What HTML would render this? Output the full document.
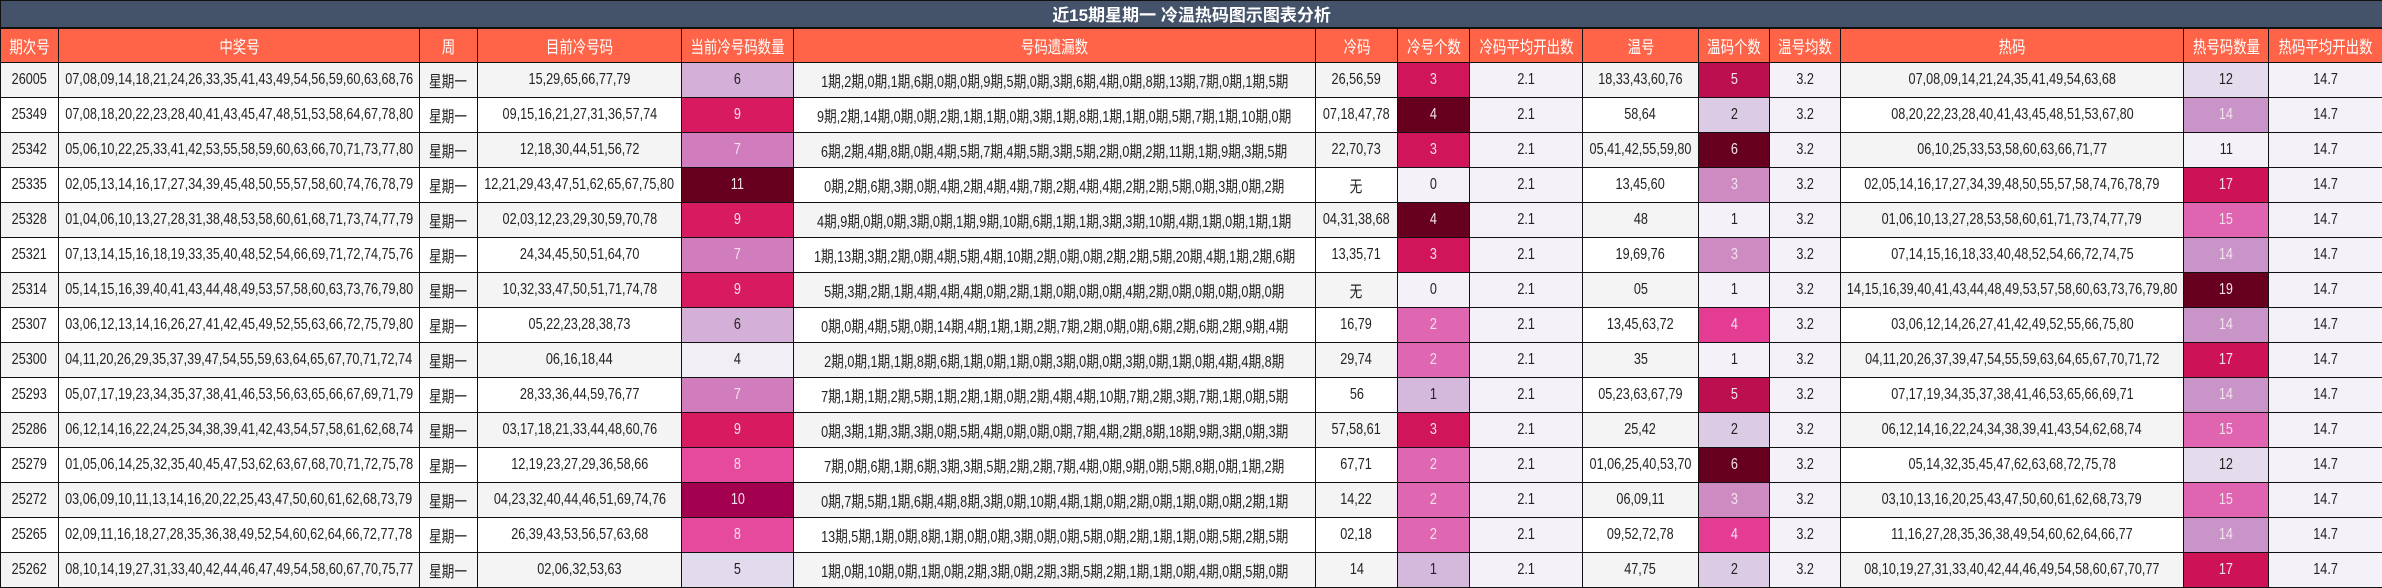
<!DOCTYPE html>
<html><head><meta charset="utf-8"><style>
*{margin:0;padding:0;box-sizing:border-box}
body{width:2382px;height:588px;overflow:hidden;background:#fff;font-family:"Liberation Sans","Noto Sans CJK SC",sans-serif}
table{border-collapse:collapse;table-layout:fixed;width:2382px}
td,th{border:1px solid #111;text-align:center;white-space:nowrap;font-weight:normal;font-size:16px;color:#222;overflow:visible}
th{background:#ff6448;color:#fff;height:35px;font-size:17px}
.t{background:#44536a;color:#fff;font-weight:bold;font-size:17px;height:27px;border-bottom:2px solid #111}
tr.r td{height:35px}
tr.o td{background:#f4f4f4}
tr.e td{background:#fff}
span{display:inline-block;margin:0 -80px;transform:scaleX(.79)}
.t span{transform:none;margin:0}
tr td.a{background:#f4f2f8}
.w{color:#f3e3ed}
</style></head><body>
<table>
<colgroup><col style="width:58px"><col style="width:361px"><col style="width:58px"><col style="width:204px"><col style="width:112px"><col style="width:522px"><col style="width:82px"><col style="width:72px"><col style="width:113px"><col style="width:116px"><col style="width:71px"><col style="width:71px"><col style="width:343px"><col style="width:85px"><col style="width:114px"></colgroup>
<tr><td class="t" colspan="15"><span>近15期星期一 冷温热码图示图表分析</span></td></tr>
<tr><th><span>期次号</span></th><th><span>中奖号</span></th><th><span>周</span></th><th><span>目前冷号码</span></th><th><span>当前冷号码数量</span></th><th><span>号码遗漏数</span></th><th><span>冷码</span></th><th><span>冷号个数</span></th><th><span>冷码平均开出数</span></th><th><span>温号</span></th><th><span>温码个数</span></th><th><span>温号均数</span></th><th><span>热码</span></th><th><span>热号码数量</span></th><th><span>热码平均开出数</span></th></tr>

<tr class="r o"><td><span>26005</span></td><td><span>07,08,09,14,18,21,24,26,33,35,41,43,49,54,56,59,60,63,68,76</span></td><td><span>星期一</span></td><td><span>15,29,65,66,77,79</span></td><td style="background:#d4afd7"><span>6</span></td><td><span>1期,2期,0期,1期,6期,0期,0期,9期,5期,0期,3期,6期,4期,0期,8期,13期,7期,0期,1期,5期</span></td><td><span>26,56,59</span></td><td class="w" style="background:#d0155a"><span>3</span></td><td class="a"><span>2.1</span></td><td><span>18,33,43,60,76</span></td><td class="w" style="background:#bc0f4f"><span>5</span></td><td class="a"><span>3.2</span></td><td><span>07,08,09,14,21,24,35,41,49,54,63,68</span></td><td style="background:#e4dbec"><span>12</span></td><td class="a"><span>14.7</span></td></tr>

<tr class="r e"><td><span>25349</span></td><td><span>07,08,18,20,22,23,28,40,41,43,45,47,48,51,53,58,64,67,78,80</span></td><td><span>星期一</span></td><td><span>09,15,16,21,27,31,36,57,74</span></td><td class="w" style="background:#d81b60"><span>9</span></td><td><span>9期,2期,14期,0期,0期,2期,1期,1期,0期,3期,1期,8期,1期,1期,0期,5期,7期,1期,10期,0期</span></td><td><span>07,18,47,78</span></td><td class="w" style="background:#67001f"><span>4</span></td><td class="a"><span>2.1</span></td><td><span>58,64</span></td><td style="background:#dccbe4"><span>2</span></td><td class="a"><span>3.2</span></td><td><span>08,20,22,23,28,40,41,43,45,48,51,53,67,80</span></td><td class="w" style="background:#c994c7"><span>14</span></td><td class="a"><span>14.7</span></td></tr>

<tr class="r o"><td><span>25342</span></td><td><span>05,06,10,22,25,33,41,42,53,55,58,59,60,63,66,70,71,73,77,80</span></td><td><span>星期一</span></td><td><span>12,18,30,44,51,56,72</span></td><td class="w" style="background:#d17cbd"><span>7</span></td><td><span>6期,2期,4期,8期,0期,4期,5期,7期,4期,5期,3期,5期,2期,0期,2期,11期,1期,9期,3期,5期</span></td><td><span>22,70,73</span></td><td class="w" style="background:#d0155a"><span>3</span></td><td class="a"><span>2.1</span></td><td><span>05,41,42,55,59,80</span></td><td class="w" style="background:#67001f"><span>6</span></td><td class="a"><span>3.2</span></td><td><span>06,10,25,33,53,58,60,63,66,71,77</span></td><td class="a"><span>11</span></td><td class="a"><span>14.7</span></td></tr>

<tr class="r e"><td><span>25335</span></td><td><span>02,05,13,14,16,17,27,34,39,45,48,50,55,57,58,60,74,76,78,79</span></td><td><span>星期一</span></td><td><span>12,21,29,43,47,51,62,65,67,75,80</span></td><td class="w" style="background:#67001f"><span>11</span></td><td><span>0期,2期,6期,3期,0期,4期,2期,4期,4期,7期,2期,4期,4期,2期,2期,5期,0期,3期,0期,2期</span></td><td><span>无</span></td><td class="a"><span>0</span></td><td class="a"><span>2.1</span></td><td><span>13,45,60</span></td><td class="w" style="background:#cd8bc2"><span>3</span></td><td class="a"><span>3.2</span></td><td><span>02,05,14,16,17,27,34,39,48,50,55,57,58,74,76,78,79</span></td><td class="w" style="background:#ce1256"><span>17</span></td><td class="a"><span>14.7</span></td></tr>

<tr class="r o"><td><span>25328</span></td><td><span>01,04,06,10,13,27,28,31,38,48,53,58,60,61,68,71,73,74,77,79</span></td><td><span>星期一</span></td><td><span>02,03,12,23,29,30,59,70,78</span></td><td class="w" style="background:#d81b60"><span>9</span></td><td><span>4期,9期,0期,0期,3期,0期,1期,9期,10期,6期,1期,1期,3期,3期,10期,4期,1期,0期,1期,1期</span></td><td><span>04,31,38,68</span></td><td class="w" style="background:#67001f"><span>4</span></td><td class="a"><span>2.1</span></td><td><span>48</span></td><td class="a"><span>1</span></td><td class="a"><span>3.2</span></td><td><span>01,06,10,13,27,28,53,58,60,61,71,73,74,77,79</span></td><td class="w" style="background:#df65b0"><span>15</span></td><td class="a"><span>14.7</span></td></tr>

<tr class="r e"><td><span>25321</span></td><td><span>07,13,14,15,16,18,19,33,35,40,48,52,54,66,69,71,72,74,75,76</span></td><td><span>星期一</span></td><td><span>24,34,45,50,51,64,70</span></td><td class="w" style="background:#d17cbd"><span>7</span></td><td><span>1期,13期,3期,2期,0期,4期,5期,4期,10期,2期,0期,0期,2期,2期,5期,20期,4期,1期,2期,6期</span></td><td><span>13,35,71</span></td><td class="w" style="background:#d0155a"><span>3</span></td><td class="a"><span>2.1</span></td><td><span>19,69,76</span></td><td class="w" style="background:#cd8bc2"><span>3</span></td><td class="a"><span>3.2</span></td><td><span>07,14,15,16,18,33,40,48,52,54,66,72,74,75</span></td><td class="w" style="background:#c994c7"><span>14</span></td><td class="a"><span>14.7</span></td></tr>

<tr class="r o"><td><span>25314</span></td><td><span>05,14,15,16,39,40,41,43,44,48,49,53,57,58,60,63,73,76,79,80</span></td><td><span>星期一</span></td><td><span>10,32,33,47,50,51,71,74,78</span></td><td class="w" style="background:#d81b60"><span>9</span></td><td><span>5期,3期,2期,1期,4期,4期,4期,0期,2期,1期,0期,0期,0期,4期,2期,0期,0期,0期,0期,0期</span></td><td><span>无</span></td><td class="a"><span>0</span></td><td class="a"><span>2.1</span></td><td><span>05</span></td><td class="a"><span>1</span></td><td class="a"><span>3.2</span></td><td><span>14,15,16,39,40,41,43,44,48,49,53,57,58,60,63,73,76,79,80</span></td><td class="w" style="background:#67001f"><span>19</span></td><td class="a"><span>14.7</span></td></tr>

<tr class="r e"><td><span>25307</span></td><td><span>03,06,12,13,14,16,26,27,41,42,45,49,52,55,63,66,72,75,79,80</span></td><td><span>星期一</span></td><td><span>05,22,23,28,38,73</span></td><td style="background:#d4afd7"><span>6</span></td><td><span>0期,0期,4期,5期,0期,14期,4期,1期,1期,2期,7期,2期,0期,0期,6期,2期,6期,2期,9期,4期</span></td><td><span>16,79</span></td><td class="w" style="background:#df66b0"><span>2</span></td><td class="a"><span>2.1</span></td><td><span>13,45,63,72</span></td><td class="w" style="background:#e43b93"><span>4</span></td><td class="a"><span>3.2</span></td><td><span>03,06,12,14,26,27,41,42,49,52,55,66,75,80</span></td><td class="w" style="background:#c994c7"><span>14</span></td><td class="a"><span>14.7</span></td></tr>

<tr class="r o"><td><span>25300</span></td><td><span>04,11,20,26,29,35,37,39,47,54,55,59,63,64,65,67,70,71,72,74</span></td><td><span>星期一</span></td><td><span>06,16,18,44</span></td><td style="background:#f1eef6"><span>4</span></td><td><span>2期,0期,1期,1期,8期,6期,1期,0期,1期,0期,3期,0期,0期,3期,0期,1期,0期,4期,4期,8期</span></td><td><span>29,74</span></td><td class="w" style="background:#df66b0"><span>2</span></td><td class="a"><span>2.1</span></td><td><span>35</span></td><td class="a"><span>1</span></td><td class="a"><span>3.2</span></td><td><span>04,11,20,26,37,39,47,54,55,59,63,64,65,67,70,71,72</span></td><td class="w" style="background:#ce1256"><span>17</span></td><td class="a"><span>14.7</span></td></tr>

<tr class="r e"><td><span>25293</span></td><td><span>05,07,17,19,23,34,35,37,38,41,46,53,56,63,65,66,67,69,71,79</span></td><td><span>星期一</span></td><td><span>28,33,36,44,59,76,77</span></td><td class="w" style="background:#d17cbd"><span>7</span></td><td><span>7期,1期,1期,2期,5期,1期,2期,1期,0期,2期,4期,4期,10期,7期,2期,3期,7期,1期,0期,5期</span></td><td><span>56</span></td><td style="background:#d5b9dc"><span>1</span></td><td class="a"><span>2.1</span></td><td><span>05,23,63,67,79</span></td><td class="w" style="background:#bc0f4f"><span>5</span></td><td class="a"><span>3.2</span></td><td><span>07,17,19,34,35,37,38,41,46,53,65,66,69,71</span></td><td class="w" style="background:#c994c7"><span>14</span></td><td class="a"><span>14.7</span></td></tr>

<tr class="r o"><td><span>25286</span></td><td><span>06,12,14,16,22,24,25,34,38,39,41,42,43,54,57,58,61,62,68,74</span></td><td><span>星期一</span></td><td><span>03,17,18,21,33,44,48,60,76</span></td><td class="w" style="background:#d81b60"><span>9</span></td><td><span>0期,3期,1期,3期,3期,0期,5期,4期,0期,0期,0期,7期,4期,2期,8期,18期,9期,3期,0期,3期</span></td><td><span>57,58,61</span></td><td class="w" style="background:#d0155a"><span>3</span></td><td class="a"><span>2.1</span></td><td><span>25,42</span></td><td style="background:#dccbe4"><span>2</span></td><td class="a"><span>3.2</span></td><td><span>06,12,14,16,22,24,34,38,39,41,43,54,62,68,74</span></td><td class="w" style="background:#df65b0"><span>15</span></td><td class="a"><span>14.7</span></td></tr>

<tr class="r e"><td><span>25279</span></td><td><span>01,05,06,14,25,32,35,40,45,47,53,62,63,67,68,70,71,72,75,78</span></td><td><span>星期一</span></td><td><span>12,19,23,27,29,36,58,66</span></td><td class="w" style="background:#e54a9c"><span>8</span></td><td><span>7期,0期,6期,1期,6期,3期,3期,5期,2期,2期,7期,4期,0期,9期,0期,5期,8期,0期,1期,2期</span></td><td><span>67,71</span></td><td class="w" style="background:#df66b0"><span>2</span></td><td class="a"><span>2.1</span></td><td><span>01,06,25,40,53,70</span></td><td class="w" style="background:#67001f"><span>6</span></td><td class="a"><span>3.2</span></td><td><span>05,14,32,35,45,47,62,63,68,72,75,78</span></td><td style="background:#e4dbec"><span>12</span></td><td class="a"><span>14.7</span></td></tr>

<tr class="r o"><td><span>25272</span></td><td><span>03,06,09,10,11,13,14,16,20,22,25,43,47,50,60,61,62,68,73,79</span></td><td><span>星期一</span></td><td><span>04,23,32,40,44,46,51,69,74,76</span></td><td class="w" style="background:#a3014f"><span>10</span></td><td><span>0期,7期,5期,1期,6期,4期,8期,3期,0期,10期,4期,1期,0期,2期,0期,1期,0期,0期,2期,1期</span></td><td><span>14,22</span></td><td class="w" style="background:#df66b0"><span>2</span></td><td class="a"><span>2.1</span></td><td><span>06,09,11</span></td><td class="w" style="background:#cd8bc2"><span>3</span></td><td class="a"><span>3.2</span></td><td><span>03,10,13,16,20,25,43,47,50,60,61,62,68,73,79</span></td><td class="w" style="background:#df65b0"><span>15</span></td><td class="a"><span>14.7</span></td></tr>

<tr class="r e"><td><span>25265</span></td><td><span>02,09,11,16,18,27,28,35,36,38,49,52,54,60,62,64,66,72,77,78</span></td><td><span>星期一</span></td><td><span>26,39,43,53,56,57,63,68</span></td><td class="w" style="background:#e54a9c"><span>8</span></td><td><span>13期,5期,1期,0期,8期,1期,0期,0期,3期,0期,0期,5期,0期,2期,1期,1期,0期,5期,2期,5期</span></td><td><span>02,18</span></td><td class="w" style="background:#df66b0"><span>2</span></td><td class="a"><span>2.1</span></td><td><span>09,52,72,78</span></td><td class="w" style="background:#e43b93"><span>4</span></td><td class="a"><span>3.2</span></td><td><span>11,16,27,28,35,36,38,49,54,60,62,64,66,77</span></td><td class="w" style="background:#c994c7"><span>14</span></td><td class="a"><span>14.7</span></td></tr>

<tr class="r o"><td><span>25262</span></td><td><span>08,10,14,19,27,31,33,40,42,44,46,47,49,54,58,60,67,70,75,77</span></td><td><span>星期一</span></td><td><span>02,06,32,53,63</span></td><td style="background:#e2dbed"><span>5</span></td><td><span>1期,0期,10期,0期,1期,0期,2期,3期,0期,2期,3期,5期,2期,1期,1期,0期,4期,0期,5期,0期</span></td><td><span>14</span></td><td style="background:#d5b9dc"><span>1</span></td><td class="a"><span>2.1</span></td><td><span>47,75</span></td><td style="background:#dccbe4"><span>2</span></td><td class="a"><span>3.2</span></td><td><span>08,10,19,27,31,33,40,42,44,46,49,54,58,60,67,70,77</span></td><td class="w" style="background:#ce1256"><span>17</span></td><td class="a"><span>14.7</span></td></tr>
</table>
</body></html>
